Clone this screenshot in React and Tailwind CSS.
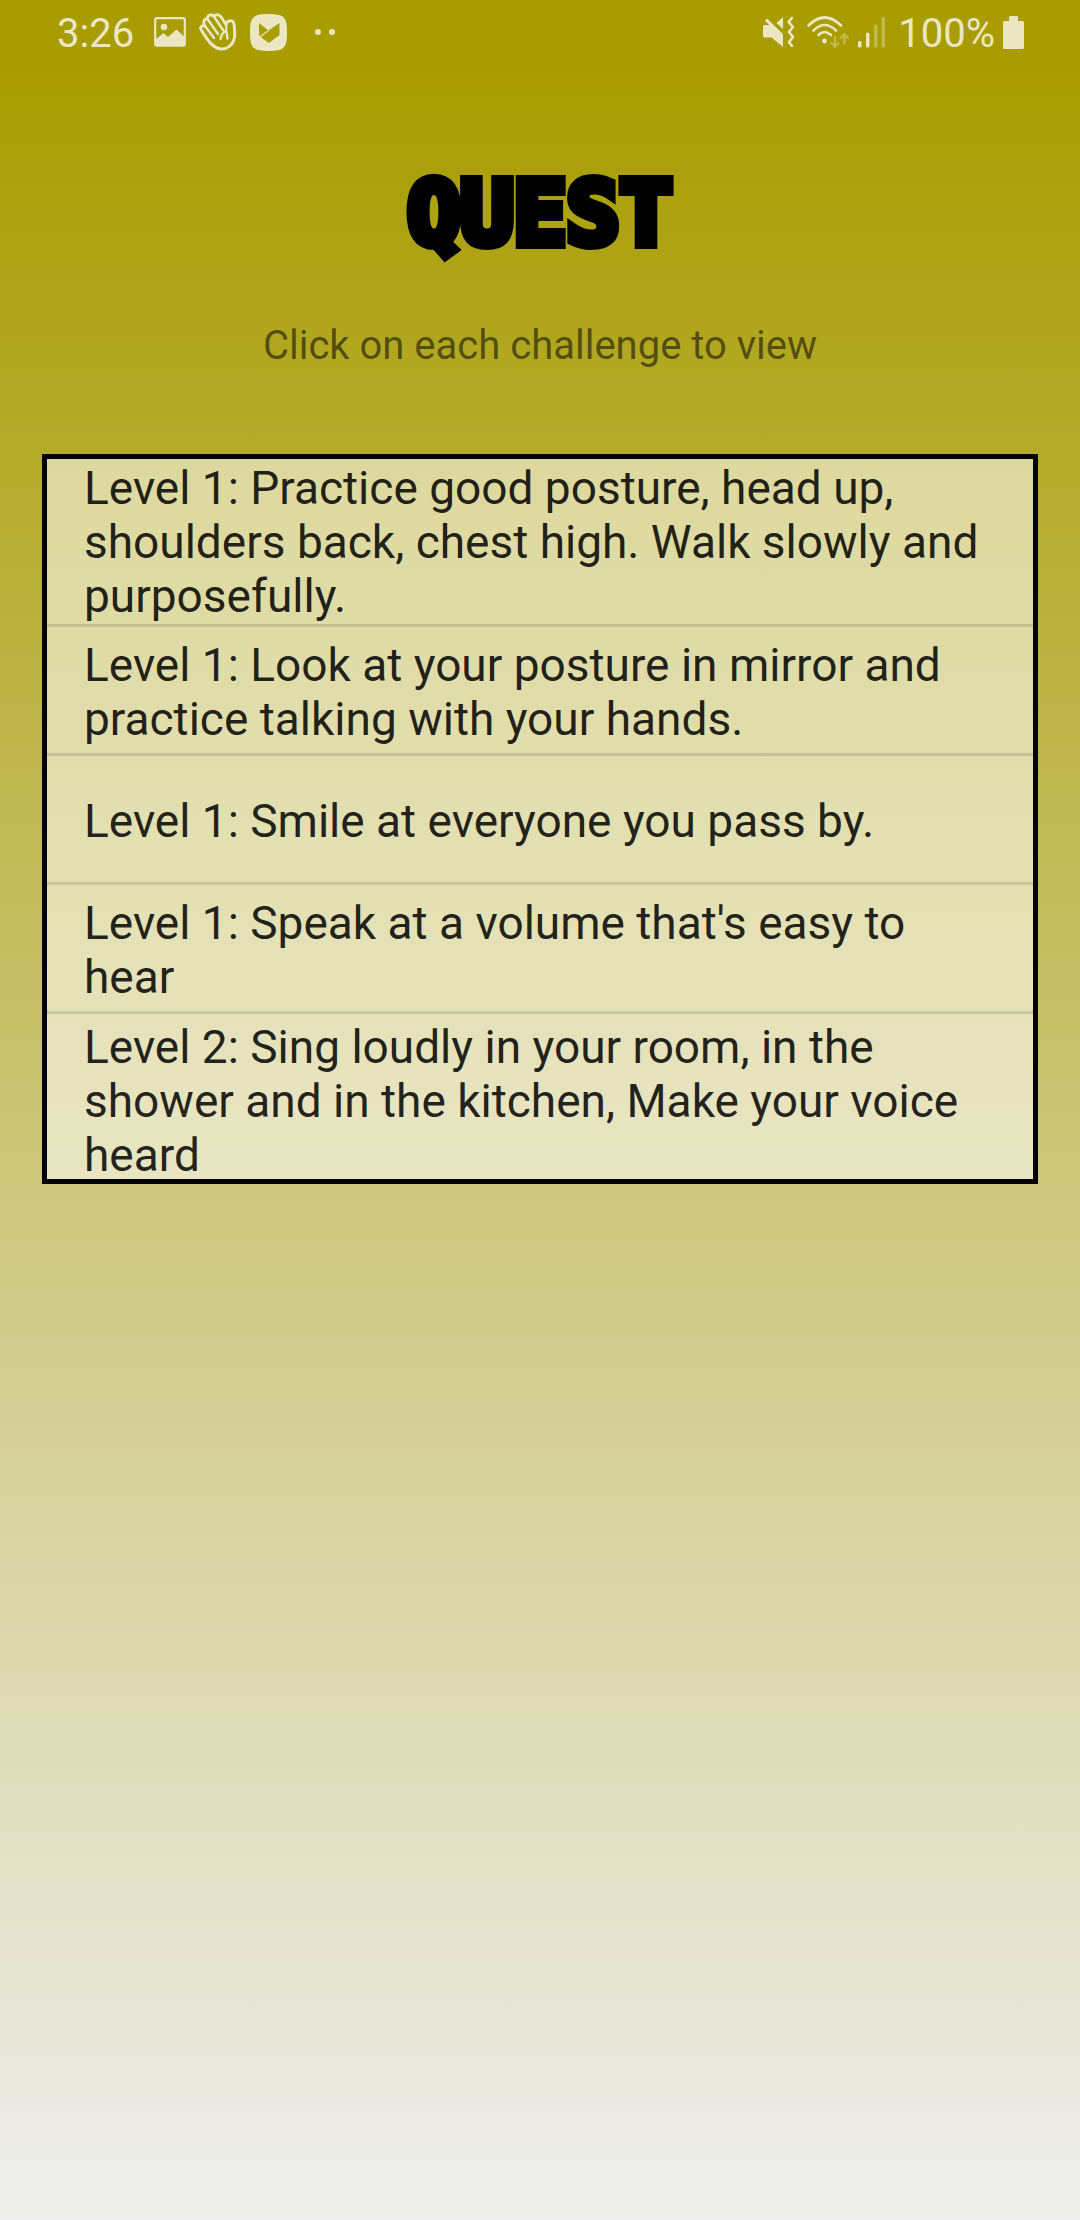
const challenges = [
  { text: "Level 1: Practice good posture, head up, shoulders back, chest high. Walk slowly and purposefully.", size: "min-h-[165px]" },
  { text: "Level 1: Look at your posture in mirror and practice talking with your hands.", size: "min-h-[126px] pt-1" },
  { text: "Level 1: Smile at everyone you pass by.", size: "min-h-[126px] pt-1" },
  { text: "Level 1: Speak at a volume that's easy to hear", size: "min-h-[126px] pt-1" },
  { text: "Level 2: Sing loudly in your room, in the shower and in the kitchen, Make your voice heard", size: "h-[165px] pt-2" },
];

function PictureIcon() {
  return (
    <svg width="32" height="30" viewBox="0 0 32 30" fill="none" aria-hidden="true">
      <rect x="1.2" y="1.2" width="29.6" height="27.4" rx="1.5" stroke="currentColor" strokeWidth="2.2" />
      <circle cx="10" cy="10" r="3.3" fill="currentColor" />
      <path d="M2 22 9.5 16 14 20 22.500 12.500 30 19.500V28H2Z" fill="currentColor" />
    </svg>
  );
}

function HandIcon() {
  return (
    <svg width="38" height="38" viewBox="0 0 38 38" fill="none" stroke="currentColor" strokeWidth="3" strokeLinecap="round" strokeLinejoin="round" aria-hidden="true">
      <path d="M3 18C0 15 3 11.500 6 13C3.500 9.500 5 5.500 8.500 6C8 2 12.500 .500 15 3.500C18 .200 21 2 22.500 4.500L27 11.500C28 7 34.500 6 35 11C35.500 15 36 20 35.500 24C34.500 32 28 36.500 22 36C14 35 9 28 3 18Z" />
      <path d="M6 13 15 25M8.500 6 19 21M15 3.500 24 17M27 11.500C28 15 27.500 18 24.500 19.500C23 21 22 23 21.500 26M27.500 19 28.500 25.500" strokeWidth="2.400" />
    </svg>
  );
}

function BadgeIcon() {
  return (
    <svg width="37" height="37" viewBox="0 0 37 37" fill="none" aria-hidden="true">
      <path d="M18.500 0C34 0 37 3 37 18.500S34 37 18.500 37 0 34 0 18.500 3 0 18.500 0Z" fill="currentColor" />
      <path d="M9 9 18.500 16.500 29.500 9V21L19 29 12.500 24.500 9 21Z" fill="#a89e00" />
      <path d="M10.500 22.500 18.500 16.500" stroke="currentColor" strokeWidth="1.200" />
    </svg>
  );
}

function MuteIcon() {
  return (
    <svg width="32" height="32" viewBox="0 0 32 32" fill="none" aria-hidden="true">
      <path d="M1.500 9H6L2 4.500 4 2.500 20 18V31L8.500 21.500H1.500Q0 21.500 0 20V10.500Q0 9 1.500 9Z" fill="currentColor" />
      <path d="M20 1V13L13.500 7Z" fill="currentColor" />
      <path d="M29 2 25.500 6 30 11 26 16 30 21 26 26 29 30" stroke="currentColor" strokeWidth="2.600" strokeLinecap="round" strokeLinejoin="round" />
    </svg>
  );
}

function WifiIcon() {
  return (
    <svg width="43" height="32" viewBox="0 0 43 32" fill="none" strokeLinecap="round" aria-hidden="true">
      <g stroke="currentColor" strokeWidth="2.600">
        <path d="M1.500 9.500Q17.500-6.500 34 9.500" />
        <path d="M6.500 14.500Q17.500 3.500 29 14.500" />
        <path d="M11.500 19Q17.500 13 24 19" />
      </g>
      <circle cx="17.500" cy="25" r="2.400" fill="currentColor" />
      <g stroke="currentColor" strokeWidth="2.200" opacity=".4" strokeLinejoin="round">
        <path d="M28 21V30M24.500 27 28 31 31.500 27M37.500 28V18.500M34 22 37.500 18 41 22" />
      </g>
    </svg>
  );
}

function SignalIcon() {
  return (
    <svg width="28" height="31" viewBox="0 0 28 31" fill="currentColor" aria-hidden="true">
      <rect x="0" y="24" width="3.500" height="6.500" rx="1.500" />
      <rect x="8" y="15.500" width="3.500" height="15" rx="1.500" />
      <rect x="16" y="7.500" width="3.500" height="23" rx="1.500" opacity=".4" />
      <rect x="23.500" y="0" width="3.500" height="30.500" rx="1.500" opacity=".4" />
    </svg>
  );
}

function BatteryIcon() {
  return (
    <svg width="21" height="33" viewBox="0 0 21 33" fill="currentColor" aria-hidden="true">
      <path d="M7 0H14Q15 0 15 1V5H19.500Q21 5 21 6.500V31.500Q21 33 19.500 33H1.500Q0 33 0 31.500V6.500Q0 5 1.500 5H6V1Q6 0 7 0Z" />
    </svg>
  );
}

export default function App() {
  return (
    <div className="flex min-h-screen flex-col bg-[linear-gradient(to_bottom,#a89c00_63px,#eeeeee_100%)] font-['Roboto',sans-serif]">
      <header className="flex h-16 items-center justify-between pr-14 pl-[57px] text-[40px] leading-[47px] text-[#ebe7c2]">
        <div className="flex items-center">
          <span className="pt-[3px]">3:26</span>
          <div className="ml-5 flex items-center gap-[13px]">
            <PictureIcon />
            <HandIcon />
            <BadgeIcon />
          </div>
          <div className="ml-7 flex gap-2">
            <span className="size-1.5 rounded-full bg-current" />
            <span className="size-1.5 rounded-full bg-current" />
          </div>
        </div>
        <div className="flex items-center">
          <MuteIcon />
          <span className="ml-3"><WifiIcon /></span>
          <span className="ml-2"><SignalIcon /></span>
          <span className="ml-3 pt-[3px]">100%</span>
          <span className="ml-2"><BatteryIcon /></span>
        </div>
      </header>
      <main className="flex flex-col px-[42px]">
        <h1 className="mt-[94px] text-center font-['DejaVu_Sans_Mono',monospace] text-[88px] leading-[112px] font-bold text-black [-webkit-text-stroke:10px_black]">
          QUEST
        </h1>
        <p className="mt-[52px] text-center text-[40px] leading-[47px] text-black/54">Click on each challenge to view</p>
        <ul className="mt-[85px] border-[5px] border-black bg-white/54 bg-clip-padding">
          {challenges.map((c) => (
            <li key={c.text} className="border-b-[3px] border-black/12 last:border-b-0">
              <button type="button" className={`flex w-full items-center px-[37px] text-left text-[46px] leading-[54px] text-black/87 ${c.size}`}>
                {c.text}
              </button>
            </li>
          ))}
        </ul>
      </main>
    </div>
  );
}
